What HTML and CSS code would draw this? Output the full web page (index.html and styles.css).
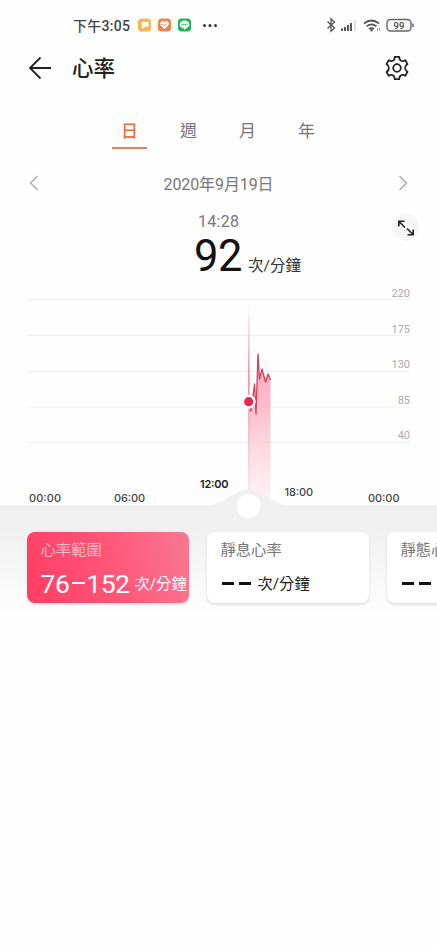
FILE: index.html
```html
<!DOCTYPE html>
<html lang="zh-Hant">
<head>
<meta charset="utf-8">
<title>心率</title>
<link rel="stylesheet" href="styles.css">
</head>
<body>
<div class="status">
  <span class="clock">下午3:05</span>
  <svg class="apps" width="80" height="16" viewBox="0 0 80 16">
    <rect x="1" y="1.5" width="13" height="13" rx="3.5" fill="#f8b84e"/>
    <path d="M4.500 5h7v4.500h-3L5 12z" fill="#fff"/>
    <rect x="21" y="1.500" width="13" height="13" rx="3.500" fill="#f0824c"/>
    <path d="M27.500 12.300 23.600 8.200a2.300 2.300 0 0 1 3.900-3 2.300 2.300 0 0 1 3.900 3z" fill="#fff"/>
    <path d="m24.500 7.600 1.800 0 1.200 1.400 1.700-2.200" fill="none" stroke="#f0824c"/>
    <rect x="41" y="1.500" width="13" height="13" rx="3.500" fill="#23b355"/>
    <ellipse cx="47.500" cy="7.400" rx="4.800" ry="3.900" fill="#fff"/>
    <path d="m46.500 11 1 2 2.500-2.500z" fill="#fff"/>
    <path d="M44.500 7.500h6" stroke="#23b355" stroke-width="1.500" stroke-dasharray="1.200 .6"/>
    <g fill="#333"><circle cx="67.500" cy="8.500" r="1.500"/><circle cx="73" cy="8.500" r="1.500"/><circle cx="78.500" cy="8.500" r="1.500"/></g>
  </svg>
  <svg class="signals" width="90" height="18" viewBox="0 0 90 18">
    <path d="m2.500 5.500 7 6.500-3.500 3.300V2.700L9.500 6l-7 6.500" fill="none" stroke="#555" stroke-width="1.300"/>
    <g fill="#555"><rect x="16" y="12.500" width="2" height="2.500"/><rect x="19" y="11" width="2" height="4"/><rect x="22" y="9" width="2" height="6"/><rect x="25" y="7" width="2" height="8"/></g>
    <rect x="29" y="4" width="1.500" height="11" fill="#d4d4d4"/>
    <g fill="none" stroke="#555" stroke-width="1.700"><path d="M39 7.500q7.500-6 15 0M41.500 10.300q5-4 10 0M44 13q2.500-1.800 5 0"/></g>
    <circle cx="46.500" cy="14.300" r="1.200" fill="#555"/>
    <path d="M52.500 12v3M54.500 12v3" stroke="#999"/>
    <rect x="62" y="3.500" width="24" height="11.500" rx="3.500" fill="none" stroke="#666" stroke-width="1.400"/>
    <path d="M88 7.500v3.500" stroke="#666" stroke-width="1.500"/>
    <text x="74" y="12.900" text-anchor="middle" class="charge">99</text>
  </svg>
</div>
<header class="bar">
  <svg class="back" width="24" height="24" viewBox="0 0 24 24"><path d="M23 12H2M12.500 1.500 2 12l10.500 10.500" fill="none" stroke="#222" stroke-width="1.800"/></svg>
  <h1>心率</h1>
  <svg class="gear" width="26" height="26" viewBox="0 0 26 26" fill="none" stroke="#222" stroke-width="1.800" stroke-linejoin="round"><path d="M10.800 1.800h4.400q.2 3.400 1.900 3.900 1.500.9 4.200-.4l2.200 3.800q-2.600 1.700-2.400 3.900 0 2.200 2.400 3.900l-2.200 3.800q-2.700-1.300-4.200-.4-1.700.5-1.900 3.900h-4.400q-.2-3.400-1.900-3.900-1.500-.9-4.200.4l-2.200-3.800q2.600-1.700 2.400-3.900 0-2.200-2.400-3.900l2.200-3.800q2.700 1.300 4.200.4 1.700-.5 1.900-3.900z"/><circle cx="13" cy="13" r="3.800"/></svg>
</header>
<nav class="tabs"><span class="tab on">日</span><span class="tab">週</span><span class="tab">月</span><span class="tab">年</span></nav>
<div class="date">
  <svg width="10" height="16" viewBox="0 0 10 16"><path d="M9.500 1 2.500 8l7 7"/></svg>
  <span>2020年9月19日</span>
  <svg width="10" height="16" viewBox="0 0 10 16"><path d="m.5 1 7 7-7 7"/></svg>
</div>
<section class="reading">
  <div class="time">14:28</div>
  <div class="value"><span class="num">92</span><span class="unit">次/分鐘</span></div>
  <div class="expand"><svg width="18" height="18" viewBox="0 0 18 18" fill="none" stroke="#222" stroke-width="1.600"><path d="M1.800 7.500V2.200h5.700M2 2.500 8 8.500M10 9.500l6 6M16.200 10.500v5.300h-5.700"/></svg></div>
</section>
<svg class="chart" width="437" height="220" viewBox="0 285 437 220">
  <defs>
    <linearGradient id="area" gradientUnits="userSpaceOnUse" x1="0" y1="350" x2="0" y2="503"><stop offset="0" stop-color="#f9809c" stop-opacity=".75"/><stop offset=".45" stop-color="#fba5b8" stop-opacity=".65"/><stop offset="1" stop-color="#fde0e6" stop-opacity=".35"/></linearGradient>
    <linearGradient id="cursor" gradientUnits="userSpaceOnUse" x1="0" y1="303" x2="0" y2="495"><stop offset="0" stop-color="#e994a8" stop-opacity="0"/><stop offset=".4" stop-color="#ec91a7"/><stop offset="1" stop-color="#f7c3cf" stop-opacity=".3"/></linearGradient>
  </defs>
  <path d="M27 299.500h383M27 335.500h383M27 371.500h383M27 407h383M27 442.500h383" stroke="#efefef" stroke-width="1.200"/>
  <g class="scale"><text x="410" y="297">220</text><text x="410" y="332.500">175</text><text x="410" y="368">130</text><text x="410" y="403.500">85</text><text x="410" y="439">40</text></g>
  <path d="M249 402 251 411 254.500 384 256 414 258 354 259.500 379 262 369 265.500 382 268 374 270.500 380V505H249z" fill="url(#area)"/>
  <rect x="248" y="303" width="1.700" height="190" fill="url(#cursor)"/>
  <path d="M249 402 251 411 254.500 384 256 414 258 354 259.500 379 262 369 265.500 382 268 374 270.500 380" fill="none" stroke="#d2415f" stroke-width="1.300" stroke-linejoin="round"/>
  <circle cx="248.700" cy="401.700" r="5.800" fill="#e7294f" stroke="#fff" stroke-width="2.400"/>
  <path d="M205 505.500C227 504 232 490 248.500 490S270 504 292 505.500z" fill="#f0f0f0"/>
  <circle cx="248.500" cy="506" r="12" fill="#fff"/>
  <g class="hours"><text x="29" y="502" textLength="32">00:00</text><text x="114" y="502" textLength="31">06:00</text><text x="200" y="488" textLength="28.500" class="near">12:00</text><text x="284.500" y="496" textLength="28.500">18:00</text><text x="368" y="502" textLength="31.500">00:00</text></g>
</svg>
<section class="cards">
  <div class="card hot"><div class="label">心率範圍</div><div class="amount"><span class="range">76<b></b>152</span><span class="unit">次/分鐘</span></div></div>
  <div class="card"><div class="label">靜息心率</div><div class="amount"><i></i><i></i><span class="unit">次/分鐘</span></div></div>
  <div class="card"><div class="label">靜態心</div><div class="amount"><i></i><i></i></div></div>
</section>
</body>
</html>
```
FILE: styles.css
```css
* { box-sizing: border-box; }
body {
  margin: 0;
  width: 437px;
  height: 946px;
  overflow: hidden;
  background: #fefefe;
  color: #222;
  font-family: Roboto, "Noto Sans CJK TC", sans-serif;
}
svg { display: block; flex: none; }
.status { display: flex; align-items: center; height: 50px; padding: 0 22px 0 73px; }
.clock { width: 57px; font-size: 14px; font-weight: 500; letter-spacing: .3px; white-space: nowrap; color: #444; }
.apps { margin-left: 7px; overflow: visible; }
.signals { margin-left: auto; }
.charge { font-size: 9.5px; font-weight: 500; fill: #444; }
.bar { display: flex; align-items: center; height: 36px; padding: 0 27px 0 28px; }
h1 { margin: 2px 0 0 20px; font-size: 21.5px; line-height: 30px; font-weight: 500; }
.gear { margin-left: auto; }
.tabs { display: flex; gap: 24px; height: 63px; padding: 30px 0 0 112px; }
.tab { width: 35px; height: 33px; text-align: center; font-size: 17px; line-height: 31px; color: #777; }
.tab.on { color: #e8713c; border-bottom: 2px solid #e8815a; font-weight: 500; }
.date { display: flex; justify-content: space-between; align-items: center; height: 68px; padding: 0 28px; font-size: 16px; letter-spacing: -.1px; color: #777; }
.date svg path { fill: none; stroke: #aaa; stroke-width: 1.4; }
.reading { position: relative; height: 68px; }
.time { padding-left: 198px; line-height: 20px; position: relative; top: -5px; font-size: 16px; letter-spacing: .3px; color: #777; }
.value { display: flex; align-items: baseline; padding-left: 194px; line-height: 40px; color: #111; }
.num { font-size: 43.5px; letter-spacing: -.4px; }
.value .unit { margin-left: 6px; font-size: 15.5px; color: #333; }
.expand { position: absolute; left: 392px; top: -3px; width: 27px; height: 27px; border-radius: 50%; background: #f6f6f6; display: grid; place-items: center; }
.chart { position: relative; overflow: visible; }
.scale { font: 11px Roboto, sans-serif; fill: #aaa; text-anchor: end; }
.hours { font: 500 11px Inter, Roboto, sans-serif; fill: #444; }
.hours .near { font-weight: 600; fill: #222; }
.cards { display: flex; gap: 18px; height: 115px; padding: 27px 0 0 27px; background: linear-gradient(#f0f0f0 20%, #fefefe 95%); overflow: hidden; }
.card { flex: none; width: 162px; height: 71px; padding: 7px 0 0 13.5px; border-radius: 8px; background: #fff; box-shadow: 0 2px 3px rgba(0,0,0,.12); overflow: hidden; }
.hot { color: #fff; background: linear-gradient(75deg, #ff3d65, #ff5577 50%, #f87893); }
.label { font-size: 15.3px; line-height: 23px; color: #777; white-space: nowrap; }
.hot .label { color: #ffb6c4; }
.amount { display: flex; align-items: center; height: 40px; white-space: nowrap; }
.range { display: flex; align-items: center; margin-top: 2px; font-size: 26.5px; letter-spacing: -.5px; }
.range b { width: 13px; height: 2.5px; margin: 0 1.5px 0 2.5px; background: #fff; }
.amount .unit { margin-left: 7px; font-size: 15.3px; }
.hot .unit { margin-left: 5px; font-size: 15.3px; }
.amount i { width: 12px; height: 3px; margin: 2px 4px 0 1px; background: #111; }
.amount i + i { margin-right: 0; }
```
